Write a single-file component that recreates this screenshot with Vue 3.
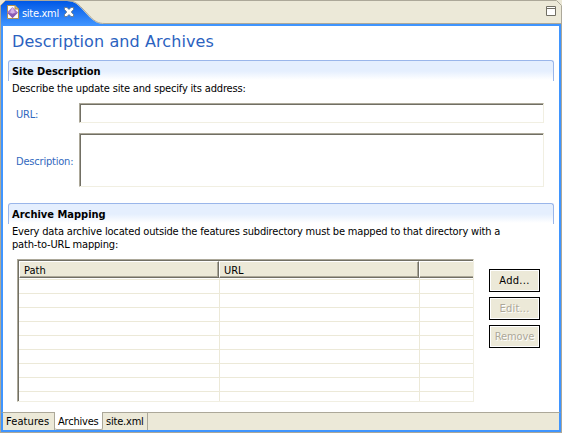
<script setup>
const rows = [0, 1, 2, 3, 4, 5, 6, 7, 8]
const buttons = [
  { label: 'Add...', cls: 'add', disabled: false },
  { label: 'Edit...', cls: 'edit', disabled: true },
  { label: 'Remove', cls: 'remove', disabled: true },
]
const pages = [
  { label: 'Features', cls: 'features' },
  { label: 'Archives', cls: 'archives active' },
  { label: 'site.xml', cls: 'source' },
]
</script>

<template>
  <div class="window">
    <header class="top">
      <svg class="frame" width="562" height="26" viewBox="0 0 562 26">
        <defs>
          <linearGradient id="tab" x1="0" y1="0" x2="0" y2="1">
            <stop offset="0" stop-color="#0058e6" />
            <stop offset="1" stop-color="#4296ff" />
          </linearGradient>
        </defs>
        <path d="M0 0H562V26H0Z" fill="#ece9d8" />
        <path d="M1 26V5L5 1H67C74 1 77 4 81 8L89 16.500C94 21.500 98 24 105 24H561V26Z" fill="url(#tab)" />
        <path d="M105 24H561V26H105Z" fill="#3f95ff" />
        <path d="M.5 26V5.500L5.500.5H556.500L561.500 5.500V26M67 .5C75 1 78 4 82 8L90 16.500C95 21.500 98 23.500 105 23.500H561" fill="none" stroke="#aca899" />
      </svg>
      <div class="tab">
        <svg class="file" width="12" height="14" viewBox="0 0 12 14">
          <path d="M.5.5H8L11.500 4V13.500H.5Z" fill="#fffdf5" stroke="#b09050" />
          <path d="M8 .5V4H11.500" fill="#e5bd65" stroke="#b09050" />
          <path d="M5.500 2L11 7.500L5.500 13L0 7.500Z" fill="#a878c8" />
          <path d="M5.500 2L8 7.500L5.500 8.500L3 7.500Z" fill="#d3b3e6" />
          <path d="M0 7.500L5.500 9L11 7.500L5.500 13Z" fill="#8a5cb4" />
        </svg>
        <span class="t-file">site.xml</span>
        <svg class="close" width="10" height="10" viewBox="0 0 10 10">
          <path d="M.5.5H3L5 2.500L7 .5H9.500V2.500L7.200 5L9.500 7.500V9.500H7L5 7.500L3 9.500H.5V7.500L2.800 5L.5 2.500Z" fill="#fff" stroke="#66737f" stroke-width=".8" />
        </svg>
      </div>
      <svg class="max" width="10" height="10" viewBox="0 0 10 10">
        <path d="M.5.5H9.500V9.500H.5ZM0 2.500H10" fill="#fff" stroke="#716f64" />
      </svg>
    </header>

    <main class="body">
      <h1>Description and Archives</h1>

      <section>
        <h2 class="t-site">Site Description</h2>
        <p>Describe the update site and specify its address:</p>
        <div class="field url">
          <label>URL:</label>
          <div class="input"></div>
        </div>
        <div class="field desc">
          <label>Description:</label>
          <div class="input"></div>
        </div>
      </section>

      <section>
        <h2>Archive Mapping</h2>
        <p class="two">Every data archive located outside the features subdirectory must be mapped to that directory with a<br>path-to-URL mapping:</p>
        <div class="mapping">
          <div class="table">
            <div class="thead">
              <div class="th c1">Path</div>
              <div class="th c2">URL</div>
              <div class="th c3"></div>
            </div>
            <div class="line first"><i class="c1"></i><i class="c2"></i><i class="c3"></i></div>
            <div v-for="r in rows" :key="r" class="line"><i class="c1"></i><i class="c2"></i><i class="c3"></i></div>
          </div>
          <div class="buttons">
            <button v-for="b in buttons" :key="b.label" :class="b.cls" :disabled="b.disabled">{{ b.label }}</button>
          </div>
        </div>
      </section>
    </main>

    <footer>
      <div v-for="p in pages" :key="p.label" class="page" :class="p.cls"><span>{{ p.label }}</span></div>
    </footer>
  </div>
</template>

<style>
body { margin: 0; background: #ece9d8; overflow: hidden; }
</style>

<style scoped>
* { box-sizing: border-box; }
.window {
  width: 562px; height: 433px; display: flex; flex-direction: column;
  font-family: "DejaVu Sans Condensed", "DejaVu Sans", sans-serif;
  font-stretch: condensed; font-size: 11px; line-height: 13px; color: #000; white-space: nowrap;
  background: #aca899;
}
.top { position: relative; height: 26px; flex: none; display: flex; justify-content: space-between; }
.frame { position: absolute; left: 0; top: 0; }
.tab { position: relative; display: flex; padding: 5px 0 0 7px; color: #fff; }
.file { flex: none; }
.t-file { width: 42px; margin-top: 2px; margin-left: 3px; letter-spacing: -.3px; }
.close { margin-top: 2px; }
.max { position: relative; margin: 6px 6px 0 0; }
.body { height: 386px; flex: none; padding: 0 5px; background: #fff; }
.body, footer { margin: 0 1px; border-left: 2px solid #3f95ff; border-right: 2px solid #3f95ff; }
h1, h2, p { margin: 0; }
h1 {
  height: 34px; padding: 5px 0 0 4px; font-family: "DejaVu Sans", sans-serif; font-stretch: normal;
  font-size: 16px; line-height: 22px; font-weight: 400; letter-spacing: .1px; color: #2b62c0;
}
h2 {
  height: 21px; width: 546px; padding: 4px 0 0 3px; font-size: 11px; line-height: 13px; font-weight: 700;
  border: 1px solid #9ab6ea; border-bottom: 0; border-radius: 3px 3px 0 0;
  background: linear-gradient(#e5effe 0, #e5effe 50%, #fff 95%);
}
.t-site { letter-spacing: -.06px; }
p { padding: 1px 0 0 4px; height: 22px; letter-spacing: -.17px; }
.field { display: flex; align-items: center; padding-left: 8px; color: #3168be; }
.field label { width: 63px; letter-spacing: -.2px; padding-top: 2px; }
.input {
  width: 465px; background: #fff; border: 1px solid; border-color: #aca899 #f1efe2 #f1efe2 #aca899;
  box-shadow: inset 1px 1px #716f64;
}
.url .input { height: 20px; }
.desc { margin-top: 10px; }
.desc .input { height: 54px; }
section + section { margin-top: 16px; }
p.two { height: 35px; line-height: 13px; }
.mapping { display: flex; padding-left: 9px; gap: 15px; }
.table {
  width: 457px; height: 143px; overflow: hidden; background: #fff; border: 1px solid;
  border-color: #aca899 #f1efe2 #f1efe2 #aca899; padding: 1px 0 0 1px;
  box-shadow: inset 1px 1px #716f64;
}
.thead { display: flex; height: 17px; }
.th {
  background: #ece9d8; border: 1px solid; border-color: #fff #716f64 #716f64 #fff;
  box-shadow: inset -1px -1px #aca899; padding: 2px 0 0 4px; flex: none;
}
.th.c1, .th.c2 { width: 200px; }
.th.c3 { width: 58px; }
.line { display: flex; height: 14px; border-bottom: 1px solid #ece9d8; }
.line.first { height: 2px; }
.line i { flex: none; width: 200px; }
.line .c1 { width: 201px; border-right: 1px solid #ece9d8; }
.line .c2 { border-right: 1px solid #ece9d8; }
.buttons { display: flex; flex-direction: column; gap: 5px; padding-top: 10px; }
button {
  width: 51px; height: 23px; padding: 0; border: 1px solid #000; border-radius: 0; background: #ece9d8;
  box-shadow: inset 0 0 0 1px #fff; font: inherit; color: #000;
}
button:disabled { color: #aca899; text-shadow: 1px 1px #fff; }
button.add { letter-spacing: .3px; }
button.edit { letter-spacing: .2px; }
button.remove { letter-spacing: -.1px; }
footer { height: 18px; flex: none; display: flex; background: #ece9d8; border-top: 1px solid #aca899; }
.page { border-right: 1px solid #aca899; padding: 2px 0 0 3px; height: 17px; }
.features { width: 52px; letter-spacing: .1px; }
.archives { width: 48px; letter-spacing: -.2px; }
.source { width: 45px; letter-spacing: -.2px; }
.active { background: #fff; margin-top: -1px; height: 18px; padding-top: 3px; border-bottom: 1px solid #aca899; border-radius: 0 0 2px 2px; }
.window::after { content: ""; height: 2px; margin: 0 1px; background: #3f95ff; }
</style>
